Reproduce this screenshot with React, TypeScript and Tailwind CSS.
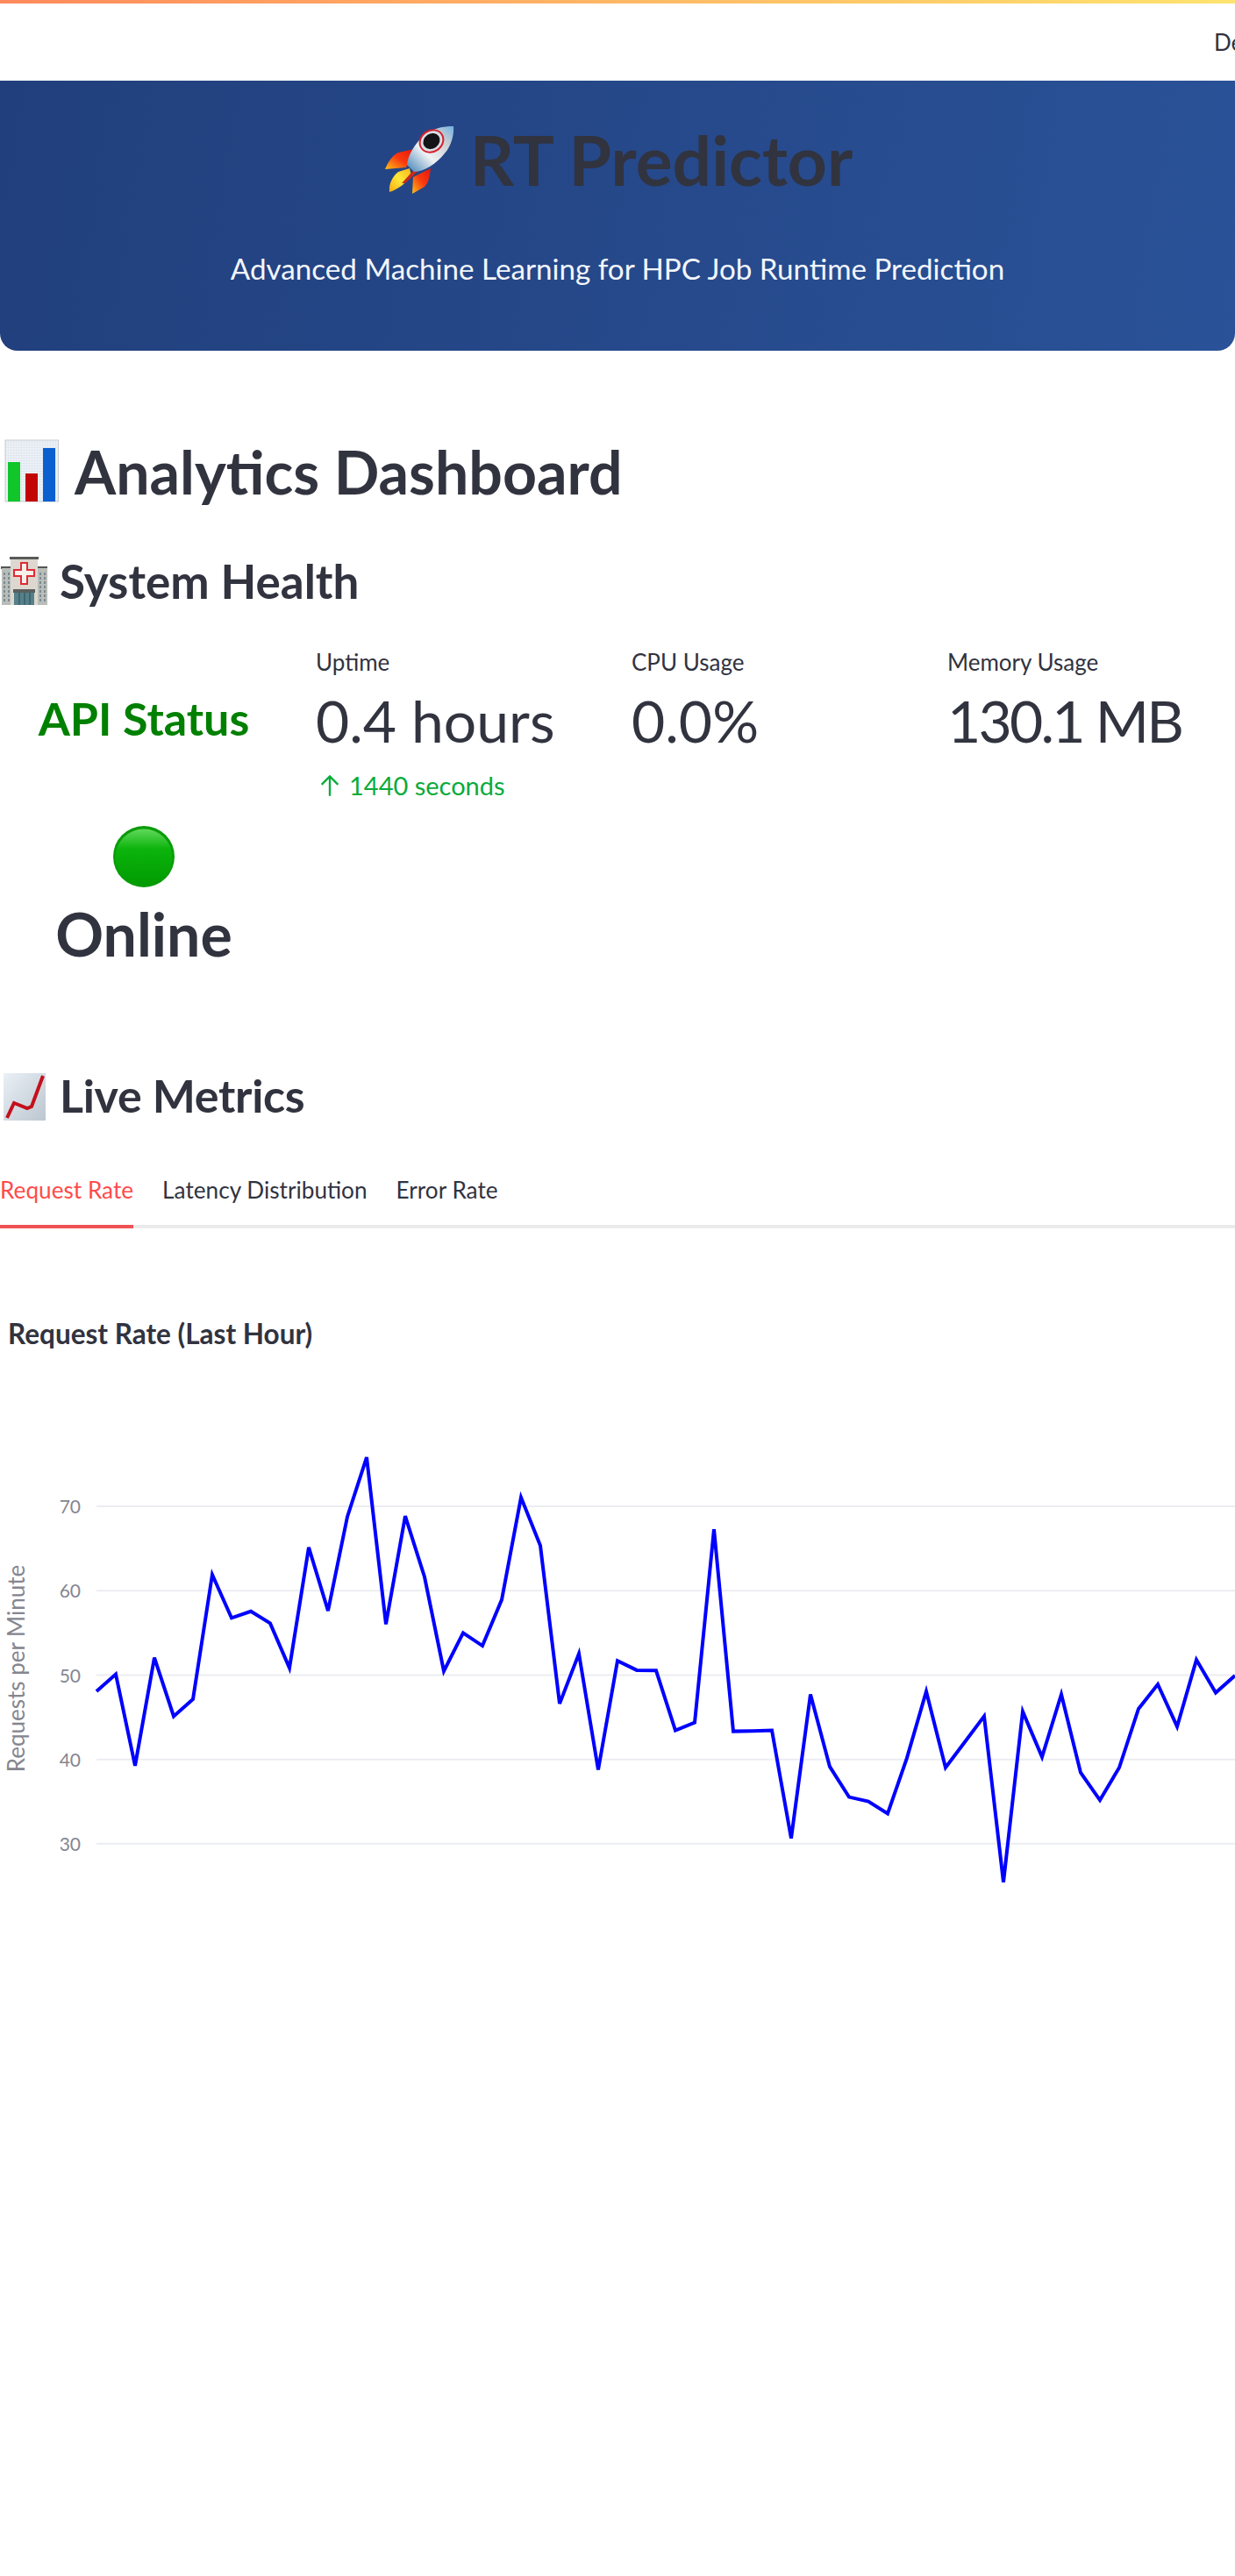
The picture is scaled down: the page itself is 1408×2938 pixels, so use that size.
const ink = "text-[#31333f]";

const chartValues = [
  862, 808, 1100, 755, 942, 888, 490, 628, 607, 645, 788, 403, 605, 305, 115, 648, 303, 497, 798, 676, 717, 570, 243,
  397, 902, 742, 1113, 765, 795, 796, 987, 962, 345, 990, 989, 987, 1332, 872, 1103, 1200, 1214, 1253, 1075, 863, 1106,
  1024, 942, 1472, 927, 1072, 872, 1122, 1210, 1106, 918, 840, 975, 762, 867, 812,
];

const linePoints = chartValues.map((v, i) => `${110 + i * 22},${(v / 2.8).toFixed(1)}`).join(" ");

const gridLines = [
  { y: 97, label: "70" },
  { y: 193.3, label: "60" },
  { y: 289.6, label: "50" },
  { y: 385.7, label: "40" },
  { y: 481.8, label: "30" },
];

function RocketIcon() {
  return (
    <svg viewBox="14 12 86 80" className="h-[80px] w-[86px] shrink-0">
      <defs>
        <linearGradient id="fin" x1="0" y1="1" x2="1" y2="0">
          <stop offset="0" stopColor="#ffc21a" />
          <stop offset="0.5" stopColor="#f93a0e" />
          <stop offset="1" stopColor="#e3170f" />
        </linearGradient>
        <linearGradient id="flame" x1="0" y1="1" x2="1" y2="0">
          <stop offset="0" stopColor="#f7a80f" />
          <stop offset="0.5" stopColor="#ffe83a" />
          <stop offset="1" stopColor="#f9b518" />
        </linearGradient>
        <linearGradient id="hull" x1="0" y1="1" x2="1" y2="0">
          <stop offset="0" stopColor="#3f7fb4" />
          <stop offset="0.4" stopColor="#eef2f4" />
          <stop offset="0.75" stopColor="#c9ced4" />
          <stop offset="1" stopColor="#6fb2e2" />
        </linearGradient>
      </defs>
      <path d="M17 63 C21 53 26 47 32 44 L50 40 L41 61 Z" fill="url(#fin)" />
      <path d="M48 91 L49 72 L69 62 C68 72 66 79 62 83 Z" fill="url(#fin)" />
      <path d="M22 89 C21 80 25 72 32 66 L45 62 L47 71 C40 79 32 86 22 89 Z" fill="url(#flame)" />
      <path d="M36 79 L56 57 L60 60 L40 79 Z" fill="#c8281a" />
      <path d="M42 58 C44 42 58 24 72 18 C82 14 90 14 95 14 C96 24 92 38 84 46 C76 56 62 66 50 66 Z" fill="url(#hull)" />
      <ellipse cx="70" cy="31" rx="14" ry="12" transform="rotate(-35 70 31)" fill="#d8dfe4" stroke="#d5202c" strokeWidth="2" />
      <ellipse cx="70" cy="31" rx="10" ry="8.5" transform="rotate(-35 70 31)" fill="#141416" />
    </svg>
  );
}

function BarChartIcon() {
  return (
    <svg viewBox="0 0 72 80" className="h-[80px] w-[72px] shrink-0">
      <defs>
        <pattern id="barGrid" width="3" height="3" patternUnits="userSpaceOnUse">
          <rect width="3" height="3" fill="#eef2f7" />
          <path d="M0 0H3M0 0V3" stroke="#ccd7e6" strokeWidth="0.6" />
        </pattern>
      </defs>
      <rect x="6" y="4" width="60.5" height="70" fill="url(#barGrid)" stroke="#c7ccd0" strokeWidth="1" />
      <rect x="9" y="29" width="14" height="45" fill="#10c62a" />
      <rect x="29" y="42" width="14" height="32" fill="#c20505" />
      <rect x="49" y="13" width="14" height="61" fill="#0b5fcf" />
    </svg>
  );
}

function HospitalIcon() {
  return (
    <svg viewBox="0 0 56 58" className="h-[58px] w-[56px] shrink-0">
      <rect x="1" y="12" width="53" height="3" fill="#555" />
      <rect x="2" y="14" width="11" height="42" fill="#b9bdb9" />
      <rect x="43" y="14" width="11" height="42" fill="#b9bdb9" />
      <path d="M5 19V53M10 19V53M46 19V53M51 19V53" stroke="#7d8a92" strokeWidth="2" strokeDasharray="3 2" />
      <rect x="12" y="3" width="31" height="53" fill="#dcd8d0" />
      <rect x="11" y="1" width="33" height="3" fill="#5a5a58" />
      <path
        d="M24 8H31V16H39V23H31V32H24V23H16V16H24Z"
        fill="#f4f0ea"
        stroke="#e02a36"
        strokeWidth="2"
      />
      <rect x="15" y="38" width="25" height="4" fill="#5a5f5e" />
      <rect x="16" y="42" width="23" height="14" fill="#54808a" />
      <path d="M22 42V56M28 42V56M34 42V56" stroke="#2e4a52" strokeWidth="1" />
    </svg>
  );
}

function ChartUpIcon() {
  return (
    <svg viewBox="0 0 56 58" className="h-[58px] w-[56px] shrink-0">
      <defs>
        <linearGradient id="chartBg" x1="0" y1="0" x2="1" y2="1">
          <stop offset="0" stopColor="#eaf0f6" />
          <stop offset="1" stopColor="#bcc6cf" />
        </linearGradient>
      </defs>
      <rect x="4" y="4" width="48" height="54" fill="url(#chartBg)" />
      <path d="M8 55 L16 38 L31 44 L36 42 L49 7" fill="none" stroke="#c4101c" strokeWidth="4" strokeLinejoin="miter" />
    </svg>
  );
}

function OnlineDot() {
  return (
    <svg viewBox="0 0 72 72" className="h-[72px] w-[72px]">
      <defs>
        <linearGradient id="dot" x1="0" y1="0" x2="0" y2="1">
          <stop offset="0" stopColor="#62d85c" />
          <stop offset="0.35" stopColor="#0cb40c" />
          <stop offset="1" stopColor="#009a00" />
        </linearGradient>
      </defs>
      <circle cx="36" cy="36" r="35" fill="#0a9c0a" />
      <circle cx="36" cy="37" r="32.5" fill="url(#dot)" />
    </svg>
  );
}

function Metric({ label, value, valueClass }: { label: string; value: string; valueClass?: string }) {
  return (
    <div>
      <div className={`text-[26px] leading-[36px] ${ink}`}>{label}</div>
      <div className={`mt-[9px] text-[66px] leading-[80px] whitespace-nowrap ${ink} ${valueClass ?? ""}`}>{value}</div>
    </div>
  );
}

function RequestChart() {
  return (
    <svg viewBox="0 0 1408 560" className="block h-[560px] w-[1408px]" style={{ fontFamily: "Lato, sans-serif" }}>
      {gridLines.map((g) => (
        <g key={g.label}>
          <line x1="110" x2="1408" y1={g.y} y2={g.y} stroke="#ebedf1" strokeWidth="2" />
          <text x="92" y={g.y + 8} textAnchor="end" fontSize="21" fill="#85868f">
            {g.label}
          </text>
        </g>
      ))}
      <text
        transform="translate(28 282) rotate(-90)"
        textAnchor="middle"
        fontSize="26"
        fill="#85868f"
      >
        Requests per Minute
      </text>
      <polyline points={linePoints} fill="none" stroke="#0000ff" strokeWidth="4" strokeLinejoin="miter" />
    </svg>
  );
}

export default function App() {
  return (
    <div className="min-h-[2938px] w-[1408px] overflow-hidden bg-white font-['Lato',sans-serif]">
      <div className="h-1 bg-gradient-to-r from-[#fd8a5c] to-[#fde36f]" />
      <div className={`h-[88px] pl-[1384px] pt-[26px] text-[26px] leading-[36px] whitespace-nowrap ${ink}`}>Deploy</div>

      <header className="h-[308px] rounded-b-[20px] bg-[linear-gradient(100deg,#213f7c,#2a5298)] text-center">
        <div className="flex h-[160px] items-center justify-center gap-[14px] pt-[20px]">
          <RocketIcon />
          <h1 className={`text-[78.5px] leading-[90px] font-bold ${ink}`}>RT Predictor</h1>
        </div>
        <p className="mt-[32px] text-[33.2px] leading-[44px] text-[#f3f6fc]">
          Advanced Machine Learning for HPC Job Runtime Prediction
        </p>
      </header>

      <section className="mt-[98px] flex items-center gap-[13px]">
        <BarChartIcon />
        <h1 className={`text-[68px] leading-[80px] font-bold ${ink}`}>Analytics Dashboard</h1>
      </section>

      <section className="mt-[53px] flex items-center gap-[12px]">
        <HospitalIcon />
        <h2 className={`text-[53px] leading-[64px] font-bold ${ink}`}>System Health</h2>
      </section>

      <div className="mt-[42px] grid grid-cols-4 gap-8">
        <div className="pt-[47px] text-center">
          <div className="text-[52px] leading-[70px] font-bold text-[#008000]">API Status</div>
          <div className="mt-[87px] flex justify-center">
            <OnlineDot />
          </div>
          <div className={`mt-[10px] text-[68px] leading-[84px] font-bold ${ink}`}>Online</div>
        </div>
        <div>
          <Metric label="Uptime" value="0.4 hours" />
          <div className="mt-[16px] flex items-center gap-[8px] pl-[2px] text-[29px] leading-[36px] text-[#09ab3b]">
            <svg viewBox="0 0 24 24" className="h-[30px] w-[28px]" fill="none" stroke="#09ab3b" strokeWidth="2">
              <path d="M12 22V3M4 11l8-8 8 8" />
            </svg>
            1440 seconds
          </div>
        </div>
        <Metric label="CPU Usage" value="0.0%" />
        <Metric label="Memory Usage" value="130.1 MB" valueClass="tracking-[-2.8px]" />
      </div>

      <section className="mt-[110px] flex items-center gap-[12px]">
        <ChartUpIcon />
        <h2 className={`text-[52px] leading-[64px] font-bold tracking-[-0.3px] ${ink}`}>Live Metrics</h2>
      </section>

      <nav className="mt-[48px] flex h-[72px] gap-[33px] border-b-4 border-[#ebebeb] text-[26.2px] leading-[36px]">
        <div className="-mb-1 h-[72px] border-b-4 border-[#ef5154] pt-[10px] text-[#ff4b4b]">Request Rate</div>
        <div className={`pt-[10px] ${ink}`}>Latency Distribution</div>
        <div className={`pt-[10px] ${ink}`}>Error Rate</div>
      </nav>

      <div className={`mt-[100px] pl-[9px] text-[31.5px] leading-[40px] font-bold ${ink}`}>Request Rate (Last Hour)</div>
      <div className="mt-[80px]">
        <RequestChart />
      </div>
    </div>
  );
}
